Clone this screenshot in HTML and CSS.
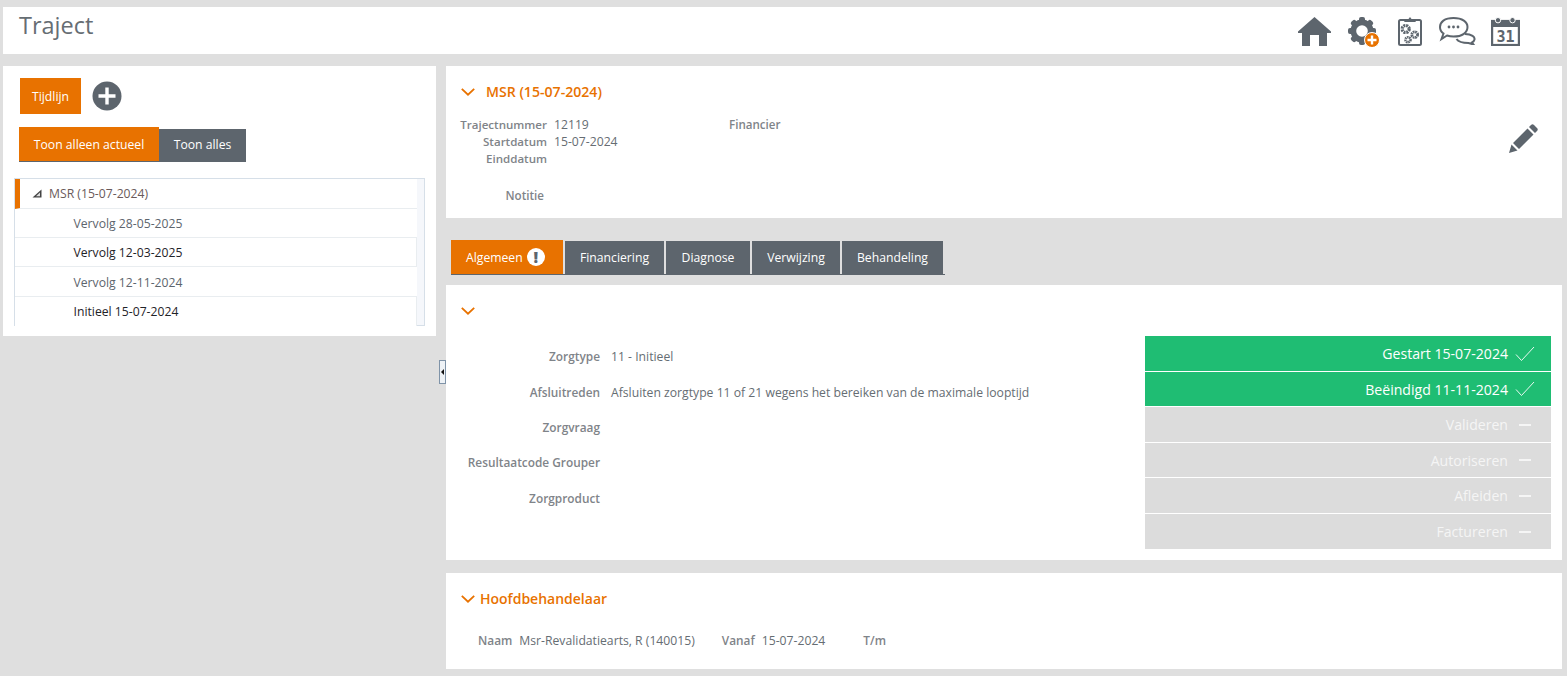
FILE: index.html
```html
<!DOCTYPE html>
<html lang="nl">
<head>
<meta charset="utf-8">
<title>Traject</title>
<link rel="stylesheet" href="styles.css">
</head>
<body>
<header class="topbar">
  <h1 class="page-title">Traject</h1>
  <nav class="top-icons">
    <svg class="ti" width="33" height="30" viewBox="0 0 33 30"><path fill="#5d656d" d="M16.500 0 L33 14.500 V16 H29 V29 H21 V18 H12 V29 H4 V16 H0 V14.500 Z"/></svg>
    <svg class="ti" width="32" height="30" viewBox="0 0 32 30"><g fill="#5d656d"><circle cx="14" cy="14" r="11.500"/><rect x="11" y="0" width="6" height="28" rx="2"/><rect x="0" y="11" width="28" height="6" rx="2"/><rect x="11" y="0" width="6" height="28" rx="2" transform="rotate(45 14 14)"/><rect x="11" y="0" width="6" height="28" rx="2" transform="rotate(-45 14 14)"/></g><circle cx="14" cy="14" r="5.800" fill="#fff"/><circle cx="24" cy="23" r="7.500" fill="#e87200" stroke="#fff" stroke-width="1"/><path d="M24 18.500v9M19.500 23h9" stroke="#fff" stroke-width="2.400"/></svg>
    <svg class="ti ti-clip" width="24" height="29" viewBox="0 0 24 29"><rect x="1" y="3" width="22" height="25" rx="1.500" fill="#fff" stroke="#5d656d" stroke-width="2"/><path d="M6 5 L8 2 H10.500 L12 0 L13.500 2 H16 L18 5 Z" fill="#5d656d"/><g fill="none" stroke="#5d656d"><circle cx="7.700" cy="12" r="3.500" stroke-width="3.200" stroke-dasharray="2 .75"/><circle cx="16.700" cy="17.700" r="2.900" stroke-width="2.800" stroke-dasharray="1.700 .6"/><circle cx="10" cy="22.700" r="2.500" stroke-width="2.600" stroke-dasharray="1.500 .6"/></g></svg>
    <svg class="ti ti-chat" width="37" height="28" viewBox="0 0 37 28"><path d="M26 17 C33 17 36 20 35.500 22.500 C35.200 24 34 25 33 25.500 L34.500 27.500 L29.500 26 C24.500 26 19.500 25 17.500 22" fill="#fff" stroke="#5d656d" stroke-width="2"/><path d="M14.500 1 C23.500 1 28.500 5 28.500 10 C28.500 15.500 23.500 19.500 14.500 19.500 C11.500 19.500 9.500 19 8 18.500 L2.500 22 L4.500 16.500 C2 15 1 12.500 1 10 C1 5 5.500 1 14.500 1 Z" fill="#fff" stroke="#5d656d" stroke-width="2"/><g fill="#5d656d"><circle cx="10" cy="10" r="1.400"/><circle cx="14.500" cy="10" r="1.400"/><circle cx="19" cy="10" r="1.400"/></g></svg>
    <svg class="ti" width="29" height="29" viewBox="0 0 29 29"><rect x="1.100" y="4" width="26.800" height="24" fill="#fff" stroke="#5d656d" stroke-width="2.200"/><rect x="0" y="4" width="29" height="6" fill="#5d656d"/><circle cx="7" cy="3.200" r="2.700" fill="#5d656d" stroke="#fff"/><circle cx="21.500" cy="3.200" r="2.700" fill="#5d656d" stroke="#fff"/><text x="14.500" y="25" text-anchor="middle" class="cal-num">31</text></svg>
  </nav>
</header>

<main class="layout">
  <aside class="left card">
    <div class="left-top">
      <button class="btn-orange">Tijdlijn</button>
      <svg width="30" height="30" viewBox="0 0 30 30"><circle cx="15" cy="15" r="14.500" fill="#5d656d"/><path d="M15 6.500v17M6.500 15h17" stroke="#fff" stroke-width="3.400"/></svg>
    </div>
    <div class="toggle">
      <span class="toggle-on">Toon alleen actueel</span>
      <span class="toggle-off">Toon alles</span>
    </div>
    <div class="tree">
      <div class="tree-row tree-root">
        <svg width="10" height="9" viewBox="0 0 10 9"><path d="M9.500 .5V8.500H.5Z" fill="#444"/><path d="M8 3.500V7.200H4Z" fill="#ddd"/></svg>
        <span>MSR (15-07-2024)</span>
      </div>
      <div class="tree-row tree-child muted">Vervolg 28-05-2025</div>
      <div class="tree-row tree-child">Vervolg 12-03-2025</div>
      <div class="tree-row tree-child muted tall">Vervolg 12-11-2024</div>
      <div class="tree-row tree-child last">Initieel 15-07-2024</div>
    </div>
  </aside>

  <div class="collapser"><i></i></div>

  <section class="right">
    <div class="card traject-card">
      <h2 class="section-head"><svg class="chev" width="14" height="8" viewBox="0 0 14 8"><path d="M.8.8 7 6.700 13.200.8" fill="none" stroke="#e87200" stroke-width="1.800"/></svg>MSR (15-07-2024)</h2>
      <div class="traject-grid">
        <dl class="pairs">
          <dt>Trajectnummer</dt><dd>12119</dd>
          <dt>Startdatum</dt><dd>15-07-2024</dd>
          <dt>Einddatum</dt><dd></dd>
        </dl>
        <span class="label financier">Financier</span>
      </div>
      <div class="label notitie">Notitie</div>
      <svg class="pencil" width="30" height="30" viewBox="0 0 30 30"><path fill="#5d656d" d="M1 29 L3.500 20.500 L9.500 26.500 Z M5 19 L19.500 4.500 L25.500 10.500 L11 25 Z M21 3 L23 1 C24 0 25 0 26 1 L29 4 C30 5 30 6 29 7 L27 9 Z"/></svg>
    </div>

    <div class="tabs">
      <span class="tab active">Algemeen<b class="warn">!</b></span>
      <span class="tab">Financiering</span>
      <span class="tab">Diagnose</span>
      <span class="tab">Verwijzing</span>
      <span class="tab">Behandeling</span>
    </div>

    <div class="card detail-card">
      <svg class="chev detail-chev" width="14" height="8" viewBox="0 0 14 8"><path d="M.8.8 7 6.700 13.200.8" fill="none" stroke="#e87200" stroke-width="1.800"/></svg>
      <div class="detail-body">
        <div class="form">
          <div class="form-row"><span class="label">Zorgtype</span><span>11 - Initieel</span></div>
          <div class="form-row"><span class="label">Afsluitreden</span><span>Afsluiten zorgtype 11 of 21 wegens het bereiken van de maximale looptijd</span></div>
          <div class="form-row"><span class="label">Zorgvraag</span></div>
          <div class="form-row"><span class="label">Resultaatcode Grouper</span></div>
          <div class="form-row"><span class="label">Zorgproduct</span></div>
        </div>
        <ul class="status">
          <li class="done">Gestart 15-07-2024<svg width="20" height="16" viewBox="0 0 20 16"><path d="M1 8.500 6.500 14.500 19 1" fill="none" stroke="#fff" stroke-width=".9"/></svg></li>
          <li class="done">Beëindigd 11-11-2024<svg width="20" height="16" viewBox="0 0 20 16"><path d="M1 8.500 6.500 14.500 19 1" fill="none" stroke="#fff" stroke-width=".9"/></svg></li>
          <li>Valideren<i class="dash"></i></li>
          <li>Autoriseren<i class="dash"></i></li>
          <li>Afleiden<i class="dash"></i></li>
          <li>Factureren<i class="dash"></i></li>
        </ul>
      </div>
    </div>

    <div class="card hb-card">
      <h2 class="section-head hb-head"><svg class="chev" width="14" height="8" viewBox="0 0 14 8"><path d="M.8.8 7 6.700 13.200.8" fill="none" stroke="#e87200" stroke-width="1.800"/></svg>Hoofdbehandelaar</h2>
      <div class="hb-row">
        <span class="label">Naam</span><span class="hb-name">Msr-Revalidatiearts, R (140015)</span>
        <span class="label">Vanaf</span><span class="hb-date">15-07-2024</span>
        <span class="label">T/m</span>
      </div>
    </div>
  </section>
</main>
</body>
</html>
```

FILE: styles.css
```css
* { box-sizing: border-box; }
html, body { height: 100%; }
body {
  margin: 0;
  padding: 7px 5px 0 3px;
  background: #dfdfdf;
  font: 12.200px/17px "Open Sans", sans-serif;
  color: #666d73;
  overflow: hidden;
}
.card { background: #fff; }
.topbar {
  height: 47px;
  background: #fff;
  display: flex;
  justify-content: space-between;
  padding: 0 42px 0 16px;
}
.page-title { margin: 0; font-size: 23.500px; line-height: 36px; font-weight: 400; color: #666d73; }
.top-icons { display: flex; align-items: flex-start; gap: 17px; padding-top: 10px; }
.ti-clip { margin-left: 1px; }
.ti-chat { margin-right: -2px; }
.cal-num { font: 700 15px "DejaVu Sans Mono", monospace; fill: #5d656d; }

.layout { display: flex; margin-top: 12px; align-items: flex-start; position: relative; }
.left { width: 433px; height: 270px; padding: 12px 11px 0 11px; }
.left-top { display: flex; align-items: center; gap: 11px; padding-left: 6px; }
.btn-orange {
  width: 61px; height: 36px; border: 0; padding: 0;
  background: #e87200; color: #fff; font: 500 12.200px "Open Sans", sans-serif;
}
.toggle { display: flex; align-items: flex-end; margin: 13px 0 16px 5px; height: 35px; }
.toggle-on, .toggle-off { display: flex; align-items: center; justify-content: center; color: #fff; font-weight: 500; }
.toggle-on { width: 140px; height: 35px; background: #e87200; border-bottom: 1px solid #5d656d; }
.toggle-off { width: 87px; height: 33px; padding-bottom: 2px; background: #5d656d; }

.tree { border: 1px solid #d6dfe8; width: 411px; height: 148px; background: #f5f7fb; }
.tree-row { width: 402px; background: #fff; display: flex; align-items: center; border-bottom: 1px solid #e9edf0; height: 29px; }
.tree-root { color: #6a5a5a; border-left: 5px solid #e87200; padding-left: 12px; gap: 7px; height: 30px; }
.tree-child { padding-left: 58.500px; padding-top: 1px; color: #1f2328; border-right: 1px solid #e9edf0; }
.tree-child.muted { color: #5d656d; border-right: 0; }
.tree-child.tall { height: 30px; }
.tree-child.last { border-bottom: 0; padding-top: 0; }

.collapser {
  position: absolute; left: 436px; top: 294px; width: 7px; height: 24px;
  border: 1px solid #7f93a8; background: #eef2f6;
  display: flex; align-items: center; justify-content: center;
}
.collapser i { border: 3px solid transparent; border-right-color: #111; border-left: 0; }

.right { margin-left: 10px; width: 1116px; }
.label { font-size: 11.850px; font-weight: 600; color: #7f8489; }
.section-head { margin: 0; color: #e87200; font-size: 14.100px; font-weight: 600; display: flex; align-items: center; }
.chev { flex: none; }

.traject-card { height: 152px; padding: 16px 15px 0 14px; position: relative; }
.traject-card .section-head { gap: 11px; line-height: 20px; padding-left: 1px; }
.traject-grid { display: flex; margin-top: 14px; }
.pairs { display: grid; grid-template-columns: 87px 167px; column-gap: 7px; margin: 0; grid-auto-rows: 17px; }
.pairs dt { font-size: 11.550px; font-weight: 600; color: #7f8489; text-align: right; }
.pairs dd { margin: 0; }
.financier { margin-left: 8px; font-size: 11.600px; }
.notitie { width: 84px; text-align: right; margin-top: 20px; font-size: 11.600px; }
.pencil { position: absolute; right: 24px; top: 58px; }

.tabs { display: flex; gap: 2px; margin: 22px 0 0 5px; height: 35px; align-items: flex-end; width: 494px; border-bottom: 1px solid #5d656d; }
.tab { height: 33px; width: 99px; justify-content: center; background: #5d656d; color: #fff; font-weight: 500; display: flex; align-items: center; }
.tab:nth-child(3) { width: 84px; }
.tab:nth-child(4) { width: 88px; }
.tab:nth-child(5) { width: 101px; }
.tab.active { height: 34px; width: 112px; background: #e87200; gap: 4px; justify-content: flex-start; padding-left: 15px; }
.warn { width: 18px; height: 18px; border-radius: 50%; background: #fff; color: #5d656d; font: 800 16px/18px "Open Sans", sans-serif; text-align: center; }

.detail-card { margin-top: 10px; height: 275px; padding: 22px 11px 0 15px; }
.detail-chev { display: block; }
.detail-body { display: flex; justify-content: space-between; margin-top: 21px; }
.form { padding-top: 12px; }
.form-row { display: flex; gap: 11px; height: 35px; }
.form-row:nth-child(1), .form-row:nth-child(4) { height: 36px; }
.form-row .label { width: 139px; text-align: right; white-space: nowrap; }
.status { list-style: none; margin: 0; padding: 0; width: 406px; display: flex; flex-direction: column; gap: 1px; }
.status li {
  height: 35px; background: #dcdcdc; color: #f5f5f5;
  font-size: 14.100px; font-weight: 400;
  display: flex; align-items: center; justify-content: flex-end; padding-right: 20px;
}
.status li:nth-child(2), .status li:nth-child(4) { height: 34px; }
.status li.done { background: #1fbd73; color: #fff; padding-right: 16px; }
.status li.done svg { margin-left: 7px; }
.dash { display: block; width: 12px; height: 2px; background: #f5f5f5; margin-left: 11px; }

.hb-card { margin-top: 13px; height: 96px; padding: 16px 15px 0 15px; }
.hb-head { gap: 5px; line-height: 20px; font-size: 14px; }
.hb-row { display: flex; margin-top: 23px; padding-left: 17px; }
.hb-name { margin: 0 27px 0 7px; }
.hb-date { margin: 0 38px 0 7px; }
```
